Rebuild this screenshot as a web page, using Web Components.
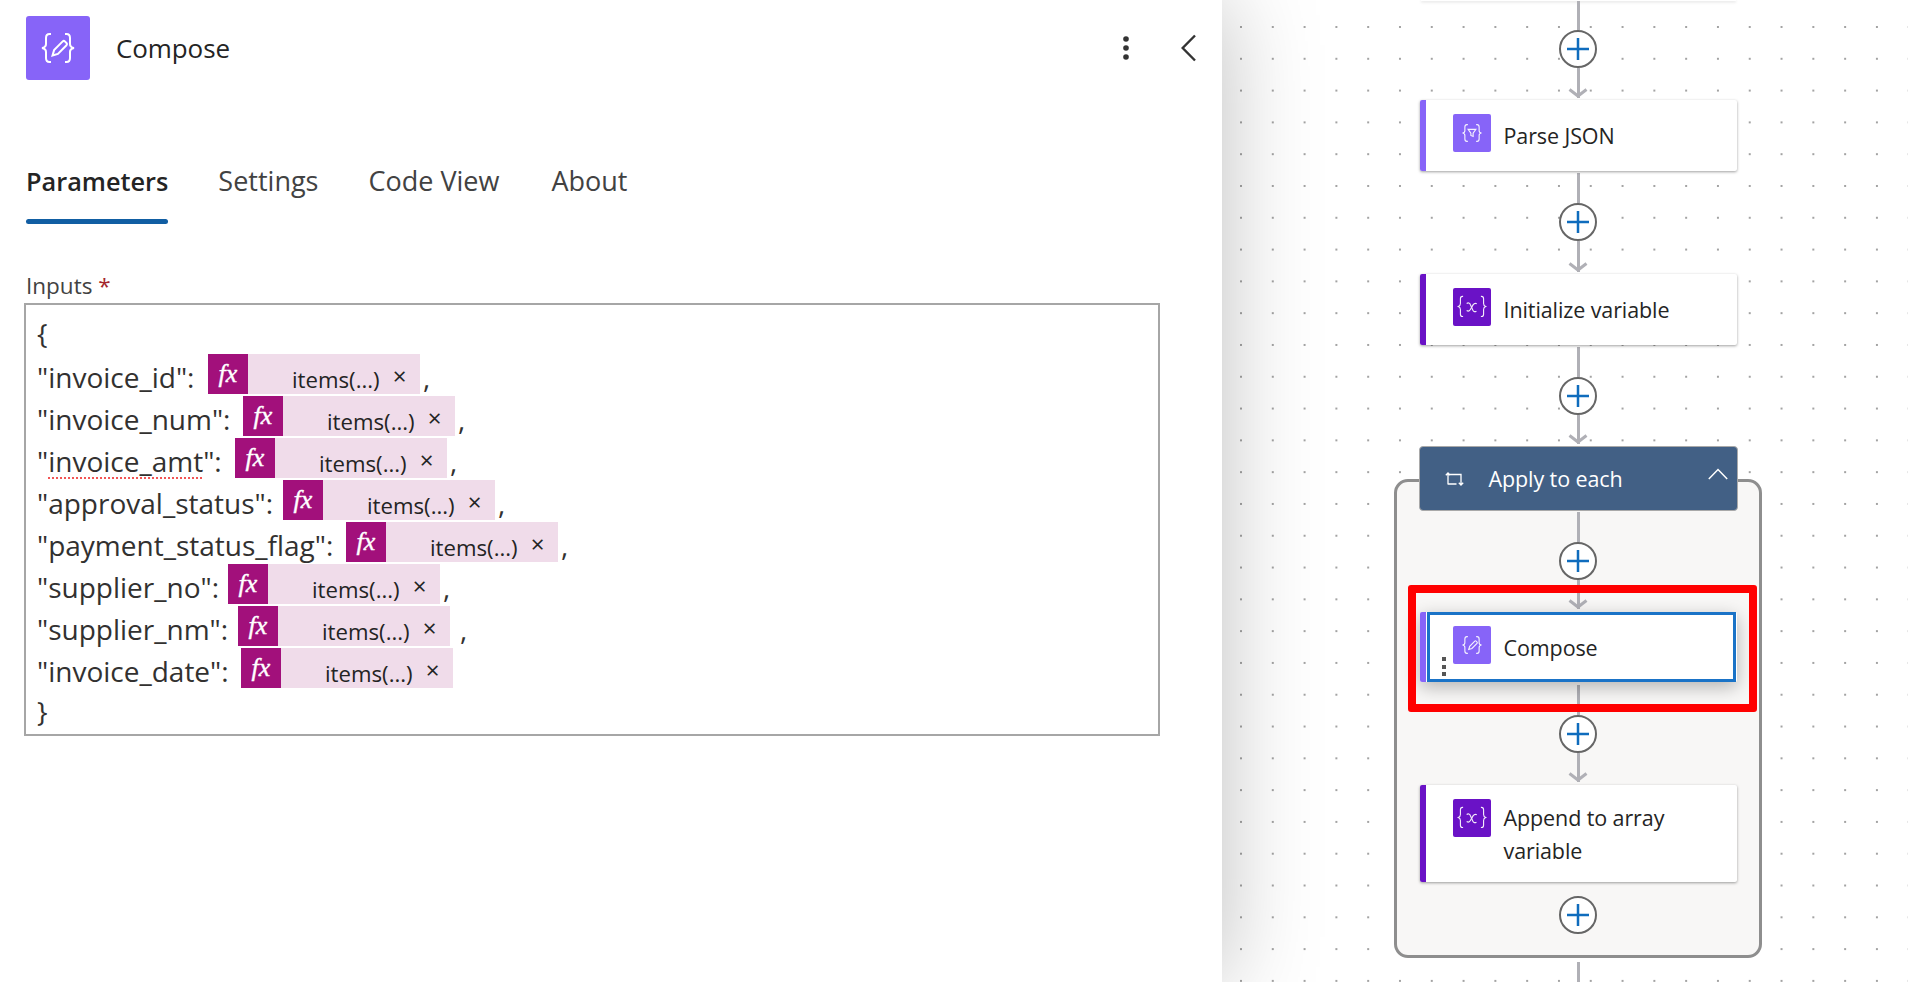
<!doctype html>
<html lang="en">
<head>
<meta charset="utf-8">
<title>Compose</title>
<style>
  html, body { margin: 0; height: 100%; overflow: hidden; background: #fff; }
  body { font-family: "Open Sans", "Noto Sans", sans-serif; }
</style>
</head>
<body>
<designer-page>
  <compose-panel slot="panel">
    <expr-row plain>{</expr-row>
    <expr-row key-width="171" comma>"invoice_id":</expr-row>
    <expr-row key-width="206" comma>"invoice_num":</expr-row>
    <expr-row key-width="198" comma squiggle="invoice_amt">"invoice_amt":</expr-row>
    <expr-row key-width="246" comma>"approval_status":</expr-row>
    <expr-row key-width="309" comma>"payment_status_flag":</expr-row>
    <expr-row key-width="191" comma>"supplier_no":</expr-row>
    <expr-row key-width="201" comma="wide">"supplier_nm":</expr-row>
    <expr-row key-width="204">"invoice_date":</expr-row>
    <expr-row plain>}</expr-row>
  </compose-panel>
  <flow-canvas slot="canvas">
    <flow-peek></flow-peek>
    <flow-edge before="0" lead="29" tail="30" after="2" arrow></flow-edge>
    <flow-card icon="parse" accent="#8764f8">Parse JSON</flow-card>
    <flow-edge before="2" lead="30" tail="31" after="2" arrow></flow-edge>
    <flow-card icon="variable" accent="#6a12c6">Initialize variable</flow-card>
    <flow-edge before="2" lead="30" tail="29" after="2" arrow></flow-edge>
    <flow-scope label="Apply to each">
      <flow-edge before="1" lead="30" tail="29" after="3" arrow></flow-edge>
      <flow-card icon="compose" accent="#8764f8" selected>Compose</flow-card>
      <flow-edge before="3" lead="30" tail="29" after="3" arrow></flow-edge>
      <flow-card icon="variable" accent="#6a12c6">Append to array<br>variable</flow-card>
      <flow-edge before="14" lead="0" tail="0" after="0"></flow-edge>
    </flow-scope>
    <flow-edge before="4" lead="24" noplus></flow-edge>
  </flow-canvas>
</designer-page>

<script>
(() => {
  "use strict";

  const BRACES = `
    <path d="M25 18h-1.5c-2.5 0-3.5 1.5-3.5 4v6c0 2.5-1 3.5-4 4 3 .5 4 1.5 4 4v6c0 2.5 1 4 3.5 4h1.5"/>
    <path d="M39 18h1.5c2.5 0 3.5 1.5 3.5 4v6c0 2.5 1 3.5 4 4-3 .5-4 1.5-4 4v6c0 2.5-1 4-3.5 4h-1.5"/>`;

  const icons = {
    compose: `${BRACES}
      <path d="M26.5 39.5l1.6-5.4 8.6-8.7a1.6 1.6 0 0 1 2.2 0l1.6 1.6a1.6 1.6 0 0 1 0 2.2l-8.6 8.7z"/>`,
    parse: `${BRACES}
      <path d="M25.5 26h13l-4.6 6.2v5.6l-3.8-1.6v-4z"/>`,
    variable: `
      <path d="M17 14h-1c-2.5 0-3.5 1.5-3.5 4v8c0 2.500-1 4-3.500 5 2.500 1 3.500 2.500 3.500 5v8c0 2.500 1 4 3.500 4h1"/>
      <path d="M47 14h1c2.500 0 3.500 1.500 3.500 4v8c0 2.500 1 4 3.500 5-2.500 1-3.500 2.500-3.500 5v8c0 2.500-1 4-3.500 4h-1"/>
      <path d="M23 26c2.500-1.500 5-1 6 1.500l4.500 10c1 2.500 3.500 3 6 1.500"/>
      <path d="M40 26.500c-2.500-1.500-4.500-.5-6 1.500l-5 8.500c-1.500 2.500-3.500 3-6 1.500"/>`,
  };

  class DesignerPage extends HTMLElement {
    connectedCallback() {
      if (this.shadowRoot) return;
      this.attachShadow({ mode: "open" }).innerHTML = `
        <style>
          :host { display: grid; grid-template-columns: 1222px 686px; height: 982px; overflow: hidden; }
          .left { position: relative; z-index: 2; background: #fff; box-shadow: 0 0 90px rgba(0,0,0,.26); }
        </style>
        <div class="left"><slot name="panel"></slot></div>
        <slot name="canvas"></slot>`;
    }
  }

  class ComposePanel extends HTMLElement {
    connectedCallback() {
      if (this.shadowRoot) return;
      this.attachShadow({ mode: "open" }).innerHTML = `
        <style>
          :host { display: block; padding: 16px 26px 0; color: #242424; }
          header { display: flex; align-items: center; height: 64px; }
          .logo { width: 64px; height: 64px; border-radius: 3px; background: #8764f8; flex: none; }
          .logo svg { display: block; width: 64px; height: 64px; fill: none; stroke: #fff; stroke-width: 2; }
          h1 { margin: 0 0 0 26px; flex: 1; font-size: 26px; font-weight: 400; line-height: 36px; letter-spacing: -.1px; }
          .more { display: block; margin-right: 52px; }
          .back { display: block; }
          nav { display: flex; gap: 50px; margin-top: 80px; }
          .tab { font-size: 27px; line-height: 42px; padding-bottom: 22px; color: #424242; position: relative; white-space: nowrap; }
          .tab:last-child { margin-left: 2px; }
          .tab.on { font-size: 25.300px; font-weight: 600; color: #242424; }
          .tab.on::after { content: ""; position: absolute; left: 0; right: 0; bottom: 0; height: 5px; border-radius: 3px; background: #115ea3; }
          label { display: block; margin-top: 46px; height: 33px; font-size: 22.500px; line-height: 31px; color: #424242; }
          label b { font-weight: 400; color: #a4262c; }
          .box {
            box-sizing: border-box; width: 1136px; margin-left: -2px; padding: 5px 11px 4px;
            border: 2px solid #a6a6a6; background: #fff;
          }
        </style>
        <header>
          <div class="logo"><svg viewBox="0 0 64 64" aria-hidden="true">${icons.compose}</svg></div>
          <h1>Compose</h1>
          <svg class="more" width="6" height="24" viewBox="0 0 6 24" aria-hidden="true" fill="#333">
            <circle cx="3" cy="3" r="2.800"/><circle cx="3" cy="12" r="2.800"/><circle cx="3" cy="21" r="2.800"/>
          </svg>
          <svg class="back" width="15" height="28" viewBox="0 0 15 28" aria-hidden="true" fill="none" stroke="#333" stroke-width="2.400">
            <path d="M14 1.500L1.700 14 14 26.500"/>
          </svg>
        </header>
        <nav>
          <div class="tab on">Parameters</div>
          <div class="tab">Settings</div>
          <div class="tab">Code View</div>
          <div class="tab">About</div>
        </nav>
        <label>Inputs <b>*</b></label>
        <div class="box"><slot></slot></div>`;
    }
  }

  class ExprRow extends HTMLElement {
    connectedCallback() {
      if (this.shadowRoot) return;
      const plain = this.hasAttribute("plain");
      const squiggle = this.getAttribute("squiggle");
      const keyWidth = this.getAttribute("key-width") || 0;
      const comma = this.getAttribute("comma");
      let key = this.textContent.trim();
      if (squiggle) key = key.replace(squiggle, `<span class="err">${squiggle}</span>`);

      this.attachShadow({ mode: "open" }).innerHTML = `
        <style>
          :host { display: flex; align-items: flex-end; height: 42px; font-size: 28px; color: #323130; }
          .key { flex: none; height: 42px; line-height: ${plain ? 47 : 50}px; white-space: nowrap; }
          .err { text-decoration: underline dotted #f25555 2px; text-underline-offset: 5px; }
          .chip { flex: none; display: flex; width: 212px; height: 40px; background: #f0dcea; }
          .fx {
            flex: none; width: 40px; height: 40px; background: #a2107b; color: #fff; text-align: center;
            font: italic 400 26px/40px "Liberation Serif", serif; -webkit-text-stroke: .4px #fff;
          }
          .val { flex: 1; padding: 0 0 0 44px; font-size: 22.200px; line-height: 52px; color: #242424; white-space: nowrap; }
          .x { flex: none; width: 41px; font-size: 24px; line-height: 44px; color: #242424; padding-left: 13px; box-sizing: border-box; }
          .comma { flex: none; height: 42px; line-height: 50px; margin-left: ${comma === "wide" ? 10 : 3}px; }
        </style>
        ${plain ? `<div class="key">${key}</div>` : `
          <div class="key" style="width:${keyWidth}px">${key}</div>
          <div class="chip">
            <div class="fx">fx</div>
            <div class="val">items(...)</div>
            <div class="x">×</div>
          </div>
          ${comma !== null ? '<div class="comma">,</div>' : ""}`}`;
    }
  }

  class FlowCanvas extends HTMLElement {
    connectedCallback() {
      if (this.shadowRoot) return;
      this.attachShadow({ mode: "open" }).innerHTML = `
        <style>
          :host {
            display: flex; flex-direction: column; align-items: center; height: 982px; overflow: hidden;
            box-sizing: border-box; padding-left: 26px; background-color: #fff;
            background-image: radial-gradient(circle, #a3a3a3 1px, transparent 1.400px);
            background-size: 31.800px 31.800px;
            background-position: 3.100px 11.100px;
          }
        </style>
        <slot></slot>`;
    }
  }

  class FlowPeek extends HTMLElement {
    connectedCallback() {
      if (this.shadowRoot) return;
      this.attachShadow({ mode: "open" }).innerHTML = `
        <style>:host { display: block; flex: none; width: 315px; height: 1px; background: #fff; box-shadow: 0 1px 3px rgba(0,0,0,.22); }</style>`;
    }
  }

  class FlowEdge extends HTMLElement {
    connectedCallback() {
      if (this.shadowRoot) return;
      const num = (name) => Number(this.getAttribute(name) || 0);
      const arrow = this.hasAttribute("arrow");
      const plus = `
        <div class="plus">
          <svg width="24" height="24" viewBox="0 0 24 24" aria-hidden="true" stroke="#0f6cbd" stroke-width="2.500">
            <path d="M1 12h22M12 1v22"/>
          </svg>
        </div>`;
      this.attachShadow({ mode: "open" }).innerHTML = `
        <style>
          :host { display: flex; flex: none; flex-direction: column; align-items: center; padding: ${num("before")}px 0 ${num("after")}px; }
          .line { flex: none; width: 3px; background: #b0b0b6; }
          .plus {
            flex: none; display: flex; align-items: center; justify-content: center; box-sizing: border-box;
            width: 38px; height: 38px; border: 2px solid #666; border-radius: 50%; background: #fff;
          }
          .head { display: block; margin-top: -10px; flex: none; }
        </style>
        <div class="line" style="height:${num("lead")}px"></div>
        ${this.hasAttribute("noplus") ? "" : plus}
        <div class="line" style="height:${num("tail")}px"></div>
        ${arrow ? `<svg class="head" width="20" height="10" viewBox="0 0 20 10" aria-hidden="true" fill="none" stroke="#b0b0b6" stroke-width="3"><path d="M1.500 1.500L10 8l8.500-6.500"/></svg>` : ""}`;
    }
  }

  class FlowCard extends HTMLElement {
    connectedCallback() {
      if (this.shadowRoot) return;
      const accent = this.getAttribute("accent");
      const selected = this.hasAttribute("selected");
      const icon = icons[this.getAttribute("icon")];
      this.attachShadow({ mode: "open" }).innerHTML = `
        <style>
          :host {
            display: flex; flex: none; position: relative; z-index: 1; box-sizing: border-box; width: 317px;
            min-height: ${selected ? 70 : 71}px; background: #fff; border-radius: 2px;
            box-shadow: ${selected ? "0 5px 18px rgba(0,0,0,.28)" : "0 1px 3px rgba(0,0,0,.38)"};
          }
          .bar { flex: none; width: 6px; background: ${accent}; border-radius: 2px 0 0 2px; }
          .body {
            flex: 1; display: flex; gap: 13px; padding-left: 27px;
            ${selected ? "border: 3px solid #1a73c7; padding-left: 23px; margin: 0 1px;" : ""}
          }
          .icon { flex: none; width: 38px; height: 38px; margin-top: ${selected ? 11 : 14}px; border-radius: 2px; background: ${accent}; }
          .icon svg { display: block; width: 38px; height: 38px; fill: none; stroke: #fff; stroke-width: 1.900; opacity: .92; }
          .text { align-self: center; padding: ${selected ? "15px 0 14px" : "15.500px 0"}; font-size: 21.500px; line-height: 33px; color: #242424; letter-spacing: -.1px; }
          .grip { position: absolute; left: 22px; top: 45px; display: flex; flex-direction: column; gap: 3.500px; }
          .grip i { display: block; width: 4px; height: 4px; background: #555; }
          .mark {
            position: absolute; left: -12px; right: -20px; top: -27px; bottom: -30px;
            border: 8px solid #f00; border-radius: 3px; pointer-events: none;
          }
        </style>
        <div class="bar"></div>
        <div class="body">
          <div class="icon"><svg viewBox="0 0 64 64" aria-hidden="true">${icon}</svg></div>
          <div class="text"><slot></slot></div>
        </div>
        ${selected ? '<div class="grip"><i></i><i></i><i></i></div><div class="mark"></div>' : ""}`;
    }
  }

  class FlowScope extends HTMLElement {
    connectedCallback() {
      if (this.shadowRoot) return;
      this.attachShadow({ mode: "open" }).innerHTML = `
        <style>
          :host { display: flex; flex: none; flex-direction: column; align-items: center; width: 368px; }
          .head {
            position: relative; z-index: 1; flex: none; box-sizing: border-box; width: 319px; height: 65px;
            display: flex; align-items: center; padding: 0 9px 0 25px; gap: 24px;
            background: #426085; border: 1px solid #a9a9a9; border-radius: 4px; color: #fff;
          }
          .title { flex: 1; font-size: 21.500px; line-height: 30px; letter-spacing: -.1px; }
          .head svg { display: block; flex: none; fill: none; stroke: #fff; }
          .up { margin-top: -9px; }
          .inner {
            box-sizing: border-box; width: 368px; margin-top: -32px; padding: 29px 0 21px;
            display: flex; flex-direction: column; align-items: center;
            border: 3px solid #8e8e8e; border-radius: 14px; background: #f8f7f6;
          }
        </style>
        <div class="head">
          <svg width="20" height="16" viewBox="0 0 20 16" aria-hidden="true" stroke-width="1.300">
            <path d="M3 13.500V2M.8 4.200L3 2l2.200 2.200M3 3.500h13V14M13.800 11.800L16 14l2.200-2.200M3 13h8.500"/>
          </svg>
          <div class="title">${this.getAttribute("label")}</div>
          <svg class="up" width="20" height="12" viewBox="0 0 20 12" aria-hidden="true" stroke-width="1.500">
            <path d="M.8 11L10 1.500 19.200 11"/>
          </svg>
        </div>
        <div class="inner"><slot></slot></div>`;
    }
  }

  customElements.define("designer-page", DesignerPage);
  customElements.define("compose-panel", ComposePanel);
  customElements.define("expr-row", ExprRow);
  customElements.define("flow-canvas", FlowCanvas);
  customElements.define("flow-peek", FlowPeek);
  customElements.define("flow-edge", FlowEdge);
  customElements.define("flow-card", FlowCard);
  customElements.define("flow-scope", FlowScope);
})();
</script>
</body>
</html>
